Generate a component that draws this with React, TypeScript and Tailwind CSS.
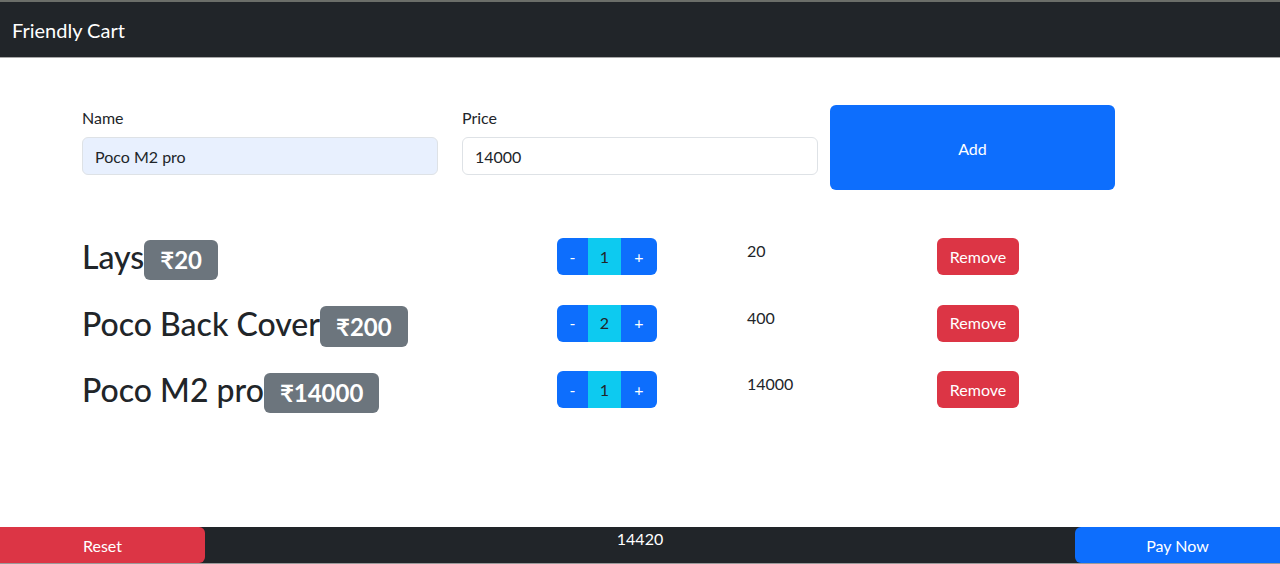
import React from "react";

const items = [
  { name: "Lays", price: 20, qty: 1 },
  { name: "Poco Back Cover", price: 200, qty: 2 },
  { name: "Poco M2 pro", price: 14000, qty: 1 },
];

export default function App() {
  return (
    <div className="min-h-[564px] bg-white text-[#212529] font-['Lato','Noto_Sans',sans-serif] text-[16px] leading-[24px]">
      <nav className="h-[58px] bg-[#212529] border-t-2 border-t-[#6b6e69] border-b border-b-[#a8a8a8] flex items-center px-[12px]">
        <span className="text-white text-[20px] leading-[30px]">Friendly Cart</span>
      </nav>

      <div className="w-[1140px] mx-auto mt-[47px]">
        <div className="flex">
          <div className="w-[380px] px-[12px] pt-[1px]">
            <label className="block mb-[7px]">Name</label>
            <input
              readOnly
              value="Poco M2 pro"
              className="w-full h-[38px] px-[12px] rounded-[6px] border border-[#dee2e6] bg-[#e8f0fe] outline-none"
            />
          </div>
          <div className="w-[380px] px-[12px] pt-[1px]">
            <label className="block mb-[7px]">Price</label>
            <input
              readOnly
              value="14000"
              className="w-full h-[38px] px-[12px] rounded-[6px] border border-[#dee2e6] bg-white outline-none"
            />
          </div>
          <div className="w-[285px]">
            <button className="w-full h-[85px] rounded-[6px] bg-[#0d6efd] text-white pt-[2px]">Add</button>
          </div>
        </div>

        <div className="mt-[48px] flex flex-col gap-[28.5px]">
          {items.map((it) => (
            <div key={it.name} className="flex items-start h-[38px]">
              <div className="w-[475px] px-[12px]">
                <h2 className="text-[32px] leading-[38px] font-medium whitespace-nowrap">
                  {it.name}
                  <span className="inline-block align-baseline bg-[#6c757d] text-white font-bold text-[24px] leading-[24px] px-[16px] py-[8.4px] rounded-[6px]">
                    ₹{it.price}
                  </span>
                </h2>
              </div>
              <div className="w-[190px] px-[12px]">
                <div className="inline-flex h-[37px] rounded-[6px] overflow-hidden">
                  <button className="w-[31px] bg-[#0d6efd] text-white">-</button>
                  <button className="w-[33px] bg-[#0dcaf0] text-[#212529]">{it.qty}</button>
                  <button className="w-[36px] bg-[#0d6efd] text-white">+</button>
                </div>
              </div>
              <div className="w-[190px] px-[12px] pt-[1px]">{it.price * it.qty}</div>
              <div className="w-[190px] px-[12px]">
                <button className="h-[37px] w-[82px] rounded-[6px] bg-[#dc3545] text-white">Remove</button>
              </div>
            </div>
          ))}
        </div>
      </div>

      <footer className="fixed bottom-0 left-0 right-0 h-[37px] flex bg-[#212529] border-b border-b-[#9a9a9a]">
        <button className="w-[205px] h-full bg-[#dc3545] text-white rounded-r-[6px] pt-[2px]">Reset</button>
        <div className="flex-1 text-center text-white">14420</div>
        <button className="w-[205px] h-full bg-[#0d6efd] text-white rounded-l-[6px] pt-[2px]">Pay Now</button>
      </footer>
    </div>
  );
}
